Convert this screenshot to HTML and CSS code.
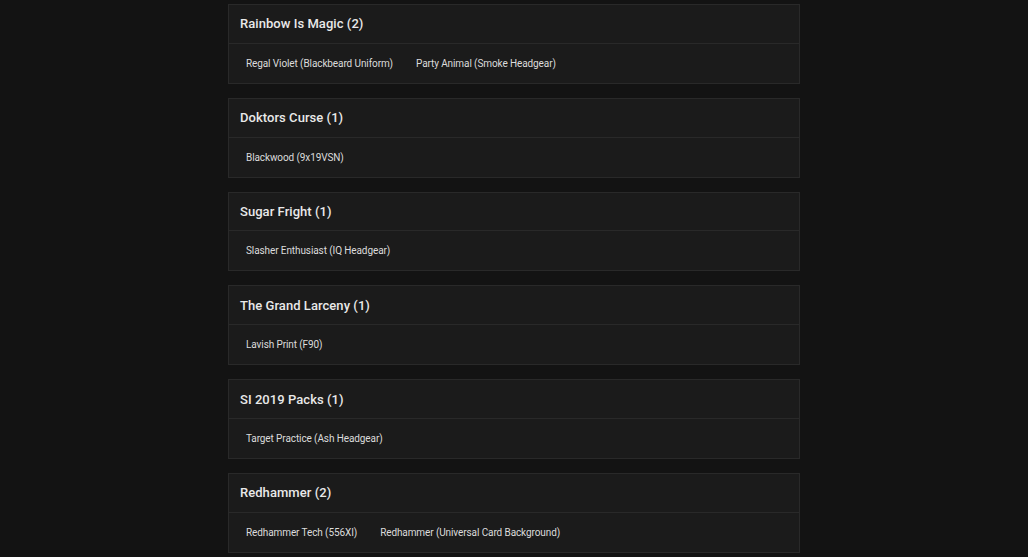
FILE: index.html
```html
<!DOCTYPE html>
<html>
<head>
<title>Collections</title>
<link rel="stylesheet" href="styles.css">
</head>
<body>

<div class="collection-list">
  <!-- Rainbow Is Magic -->
  <div class="collection">
    <div class="collection-header">Rainbow Is Magic (2)</div>
    <div class="collection-items">
      <span class="item">Regal Violet (Blackbeard Uniform)</span>
      <span class="item">Party Animal (Smoke Headgear)</span>
    </div>
  </div>

  <!-- Doktors Curse -->
  <div class="collection">
    <div class="collection-header">Doktors Curse (1)</div>
    <div class="collection-items">
      <span class="item">Blackwood (9x19VSN)</span>
    </div>
  </div>

  <!-- Sugar Fright -->
  <div class="collection">
    <div class="collection-header">Sugar Fright (1)</div>
    <div class="collection-items">
      <span class="item">Slasher Enthusiast (IQ Headgear)</span>
    </div>
  </div>

  <!-- The Grand Larceny -->
  <div class="collection">
    <div class="collection-header">The Grand Larceny (1)</div>
    <div class="collection-items">
      <span class="item">Lavish Print (F90)</span>
    </div>
  </div>

  <!-- SI 2019 Packs -->
  <div class="collection">
    <div class="collection-header">SI 2019 Packs (1)</div>
    <div class="collection-items">
      <span class="item">Target Practice (Ash Headgear)</span>
    </div>
  </div>

  <!-- Redhammer -->
  <div class="collection">
    <div class="collection-header">Redhammer (2)</div>
    <div class="collection-items">
      <span class="item">Redhammer Tech (556XI)</span>
      <span class="item">Redhammer (Universal Card Background)</span>
    </div>
  </div>
</div>

</body>
</html>
```

FILE: styles.css
```css
/* Page background and font */
body {
  margin: 0;
  background-color: #131313;
  font-family: Roboto, 'Open Sans', sans-serif;
  color: #e8e8e8;
}

/* Centered column of collection cards */
.collection-list {
  width: 572px;
  margin: 0 auto;
  padding-top: 4px;
  display: flex;
  flex-direction: column;
  gap: 14px;
}

/* Single collection card */
.collection {
  background-color: #1b1b1b;
  border: 1px solid #292929;
}

.collection-header {
  height: 37.8px;
  padding: 0 11px;
  display: flex;
  align-items: center;
  font-size: 13px;
  font-weight: 500;
  letter-spacing: 0.05px;
  color: #e9e9e9;
  border-bottom: 1px solid #292929;
}

.collection-items {
  height: 39px;
  padding: 0 17px;
  display: flex;
  align-items: center;
  gap: 23px;
}

.item {
  font-size: 10px;
  letter-spacing: -0.1px;
  color: #dcdcdc;
}
```
